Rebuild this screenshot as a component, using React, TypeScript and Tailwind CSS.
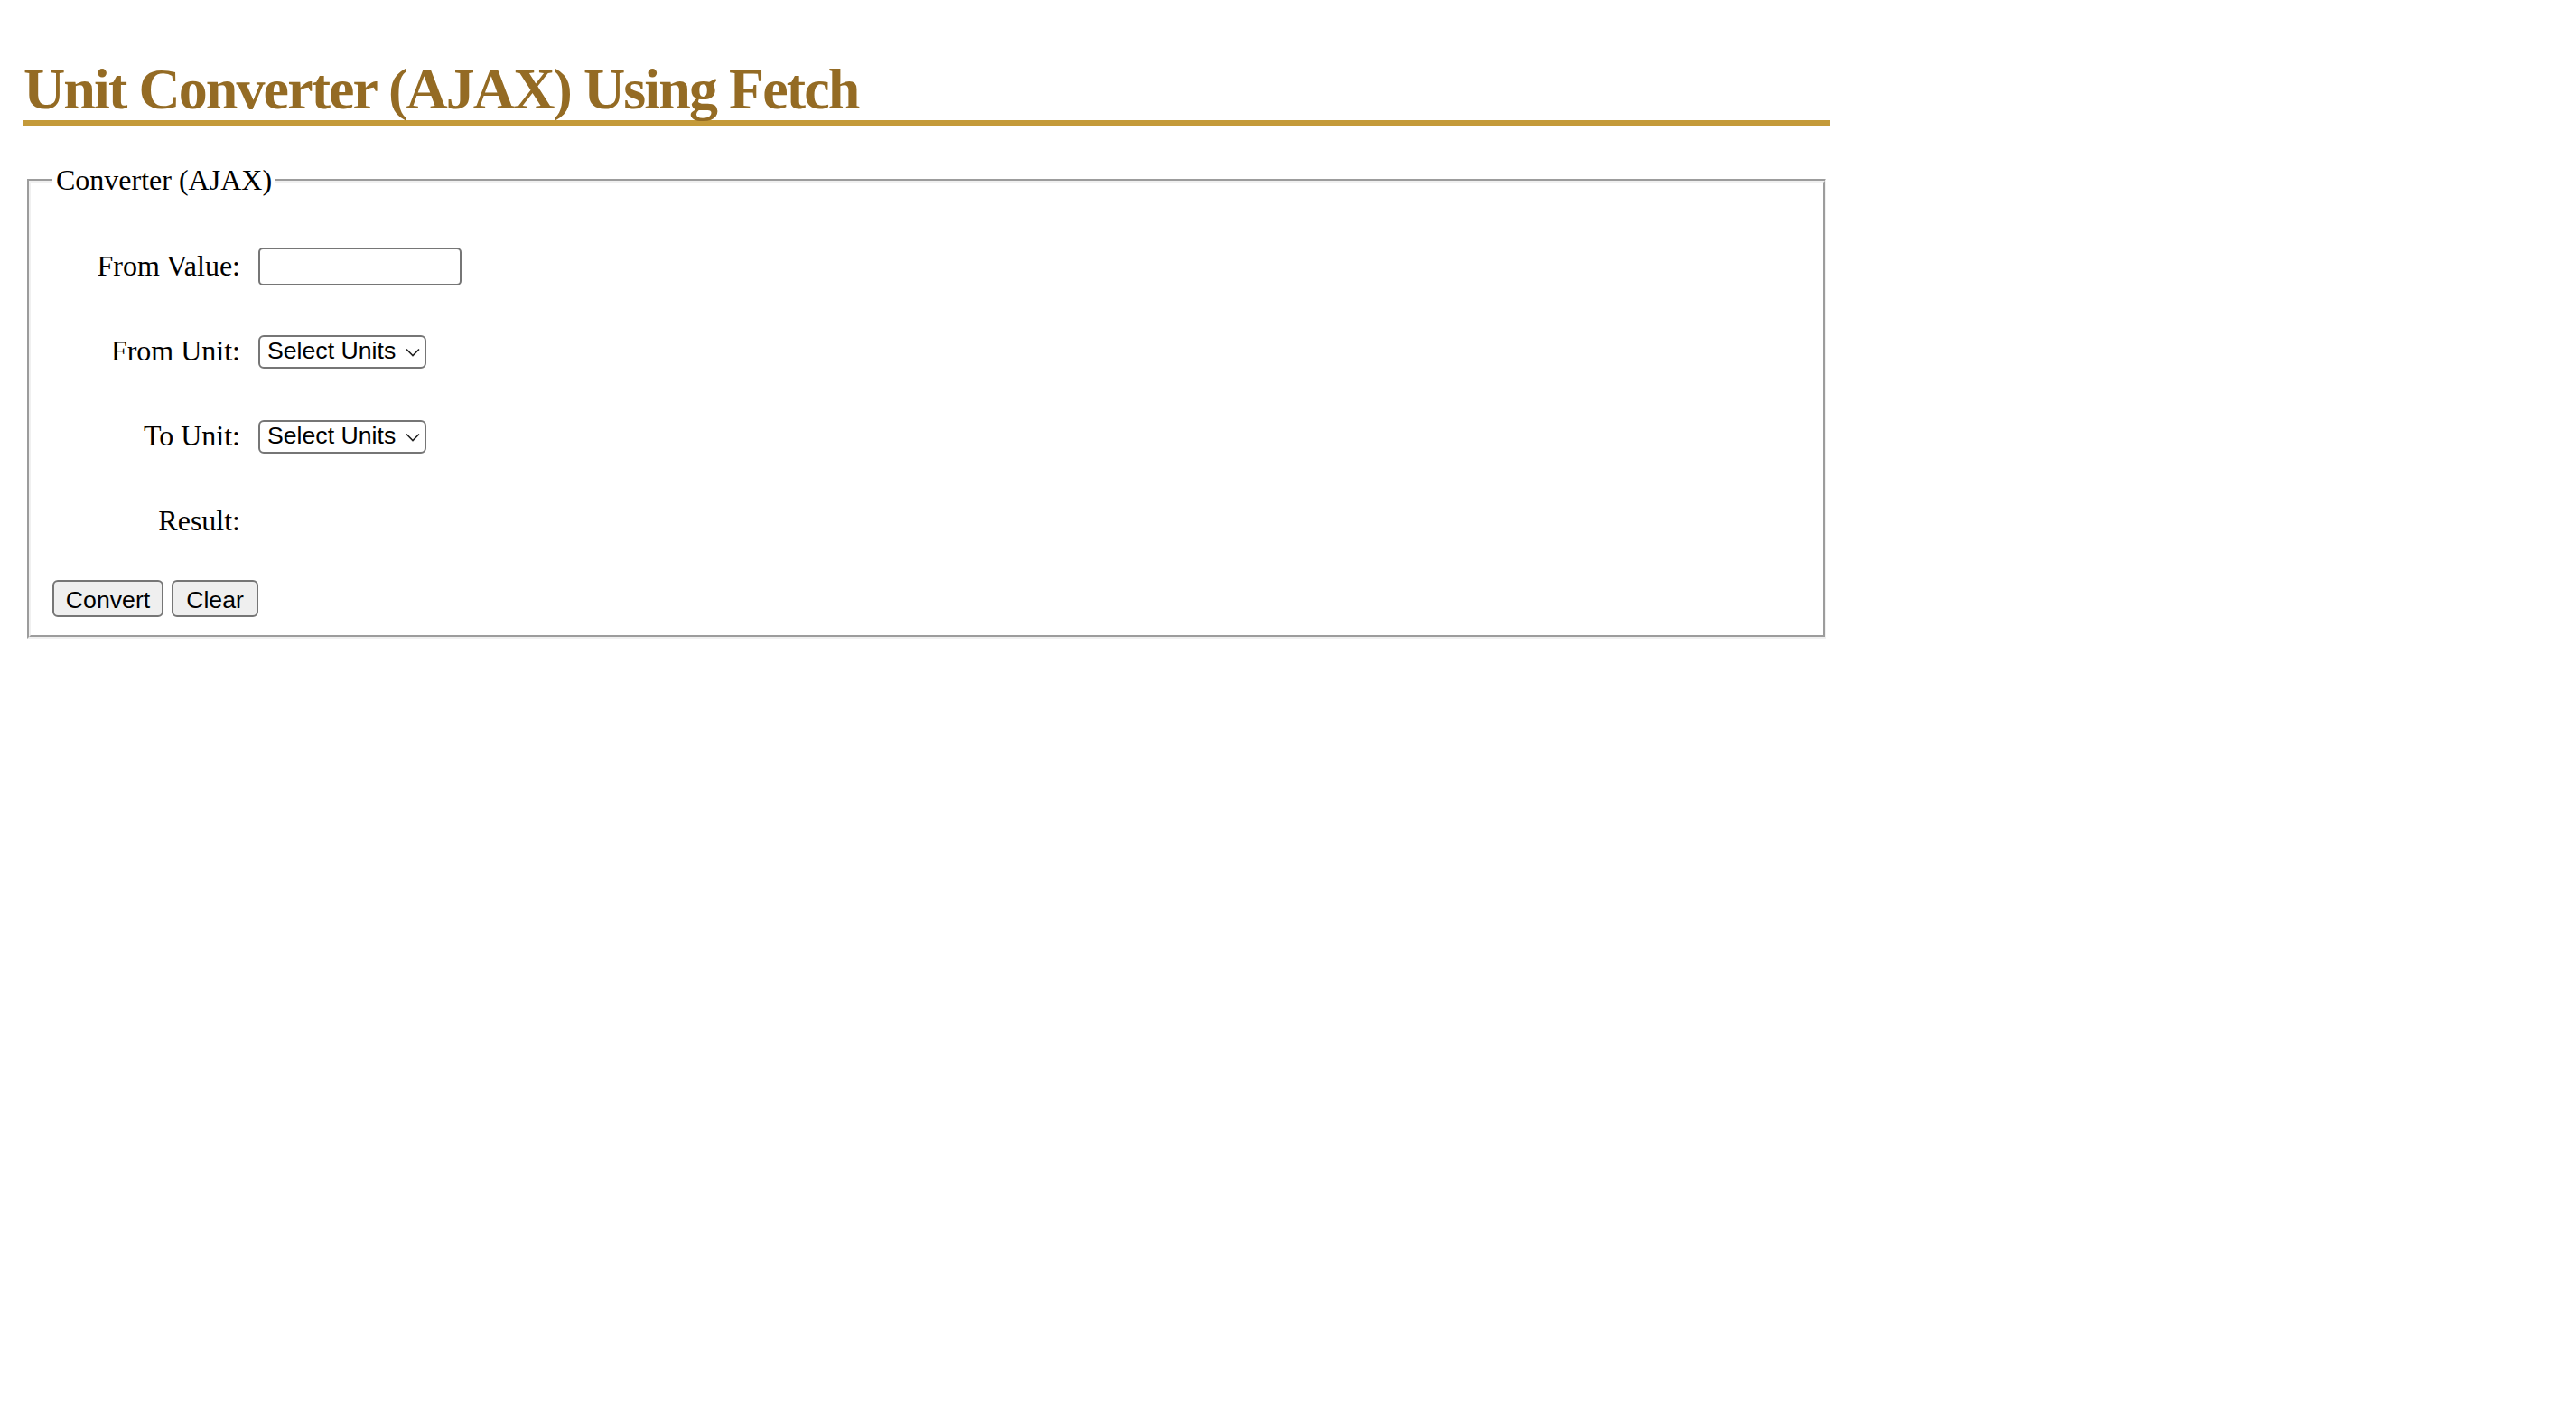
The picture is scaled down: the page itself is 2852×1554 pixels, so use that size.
import { useState } from 'react';

const serif = { fontFamily: '"Liberation Serif", "Times New Roman", serif' };
const sans = { fontFamily: '"Liberation Sans", Arial, sans-serif' };

const units = ['Select Units', 'Meters', 'Feet', 'Inches', 'Centimeters', 'Kilometers', 'Miles'];

function UnitSelect({ value, onChange }: { value: string; onChange: (v: string) => void }) {
  return (
    <div className="relative w-[186px] h-[37px]">
      <select
        value={value}
        onChange={(e) => onChange(e.target.value)}
        className="appearance-none w-full h-full bg-white border-2 border-[#767676] rounded-[6px] pl-[8px] pr-[30px] pb-[5px] text-[26.67px] leading-[30px] text-black outline-none"
        style={sans}
      >
        {units.map((u) => (
          <option key={u} value={u}>{u}</option>
        ))}
      </select>
      <svg
        className="pointer-events-none absolute right-[7px] top-[14px] w-[16px] h-[10px]"
        viewBox="0 0 16 10"
        fill="none"
        stroke="#222"
        strokeWidth="1.6"
      >
        <path d="M1 1.5 L8 8.5 L15 1.5" />
      </svg>
    </div>
  );
}

function Row({ label, children }: { label: string; children?: React.ReactNode }) {
  return (
    <div className="flex items-center h-[94px]">
      <label className="w-[208px] text-right text-[32px] text-black -mt-[2px]" style={serif}>
        {label}
      </label>
      <div className="ml-[20px]">{children}</div>
    </div>
  );
}

export default function App() {
  const [value, setValue] = useState('');
  const [fromUnit, setFromUnit] = useState('Select Units');
  const [toUnit, setToUnit] = useState('Select Units');
  const [result, setResult] = useState('');

  const clear = () => {
    setValue('');
    setFromUnit('Select Units');
    setToUnit('Select Units');
    setResult('');
  };

  return (
    <div className="min-h-screen bg-white">
      <div className="w-[2000px] ml-[26px] pt-[67px]">
        <h1
          className="text-[64px] leading-[64px] font-bold tracking-[-1.9px] text-[#946b24] pb-[2px] border-b-[6px] border-[#c49a3a]"
          style={serif}
        >
          Unit Converter (AJAX) Using Fetch
        </h1>

        <fieldset className="mt-[42px] mx-[4px] border-[4px] [border-style:groove] border-[#f0f0f0] px-[24px] pt-[30px] pb-[20px]">
          <legend className="px-[4px] text-[32px] leading-[37px] text-black" style={serif}>
            Converter (AJAX)
          </legend>

          <Row label="From Value:">
            <input
              type="text"
              value={value}
              onChange={(e) => setValue(e.target.value)}
              className="block w-[225px] h-[42px] border-2 border-[#767676] rounded-[5px] px-[4px] text-[26.67px] outline-none"
              style={sans}
            />
          </Row>
          <Row label="From Unit:">
            <UnitSelect value={fromUnit} onChange={setFromUnit} />
          </Row>
          <Row label="To Unit:">
            <UnitSelect value={toUnit} onChange={setToUnit} />
          </Row>
          <Row label="Result:">
            <span className="text-[32px]" style={serif}>{result}</span>
          </Row>

          <div className="flex gap-[9px] mt-[18px]">
            <button
              onClick={() => setResult(value)}
              className="w-[123px] h-[41px] bg-[#efefef] border-2 border-[#767676] rounded-[6px] text-[26.67px] text-black"
              style={sans}
            >
              Convert
            </button>
            <button
              onClick={clear}
              className="w-[96px] h-[41px] bg-[#efefef] border-2 border-[#767676] rounded-[6px] text-[26.67px] text-black"
              style={sans}
            >
              Clear
            </button>
          </div>
        </fieldset>
      </div>
    </div>
  );
}
